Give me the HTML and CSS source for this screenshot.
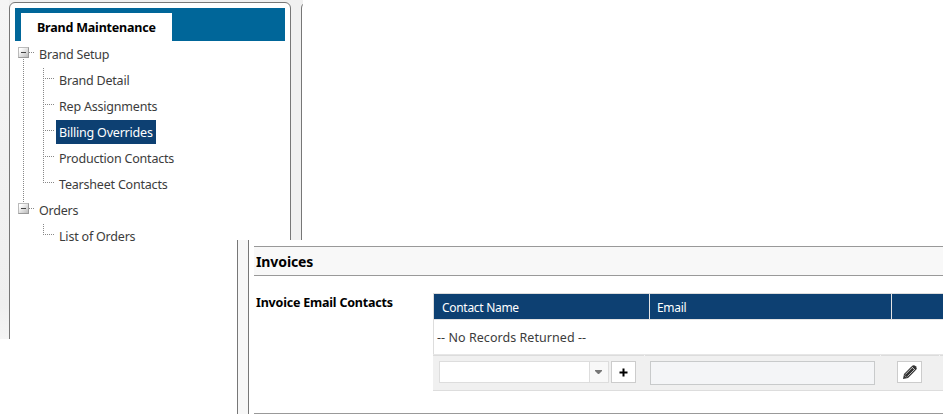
FILE: index.html
```html
<!DOCTYPE html>
<html lang="en">
<head>
<meta charset="utf-8">
<title>Brand Maintenance</title>
<link rel="stylesheet" href="styles.css">
</head>
<body>
<div class="nav-window">
  <div class="gutter"></div>
  <div class="backdrop">
    <nav class="panel">
      <div class="tabs"><div class="tab">Brand Maintenance</div></div>
      <ul class="tree">
        <li class="branch joined">
          <div class="row"><i class="toggle"></i><span>Brand Setup</span></div>
          <ul class="leaves">
            <li><span>Brand Detail</span></li>
            <li><span>Rep Assignments</span></li>
            <li class="selected"><span>Billing Overrides</span></li>
            <li><span>Production Contacts</span></li>
            <li><span>Tearsheet Contacts</span></li>
          </ul>
        </li>
        <li class="branch">
          <div class="row"><i class="toggle"></i><span>Orders</span></div>
          <ul class="leaves">
            <li><span>List of Orders</span></li>
          </ul>
        </li>
      </ul>
    </nav>
    <div class="next-panel"></div>
  </div>
</div>
<main class="detail-window">
  <div class="splitter"></div>
  <section class="content">
    <h2>Invoices</h2>
    <div class="field">
      <div class="label">Invoice Email Contacts</div>
      <div class="table">
        <div class="thead">
          <div class="c1">Contact Name</div>
          <div class="c2">Email</div>
          <div class="c3"></div>
        </div>
        <div class="empty">-- No Records Returned --</div>
        <div class="tfoot">
          <div class="combo"><div class="combo-text"></div><div class="combo-arrow"><svg width="7" height="4" viewBox="0 0 7 4"><path d="M0 0h7v1L4 4H3L0 1z" fill="#777"/></svg></div></div>
          <div class="btn"><svg width="9" height="9" viewBox="0 0 9 9"><path d="M3.5 0.5h2v3h3v2h-3v3h-2v-3h-3v-2h3z" fill="#000"/></svg></div>
          <div class="email"></div>
          <div class="btn edit"><svg width="16" height="16" viewBox="0 0 16 16"><path d="M1 15 2 10 10.2 1.8Q11.8 .3 13.8 2.2Q15.7 4.2 14.2 5.8L6 14Z" fill="#333"/><path d="M3.3 10.5 9.8 4M5.4 12.6 12 6" stroke="#ddd" stroke-width=".8"/><path d="M9.7 2.8 13.2 6.3" stroke="#fff" stroke-width=".8"/><path d="M2.5 11.3 4.7 13.5" stroke="#bbb" stroke-width=".7"/></svg></div>
        </div>
      </div>
    </div>
  </section>
</main>
</body>
</html>
```

FILE: styles.css
```css
* { box-sizing: border-box; }
body { margin: 0; width: 943px; height: 414px; overflow: hidden; position: relative; background: #fff; color: #3c3c3c; font: 12.5px/26px "Noto Sans", "Open Sans", sans-serif; letter-spacing: -.2px; white-space: nowrap; }
ul { list-style: none; margin: 0; padding: 0; }
svg { display: block; }

.nav-window { display: flex; height: 339px; width: 303px; }
.gutter { width: 9px; background: linear-gradient(#f5f5f5, #efefef 90%, #f5f5f5); }
.backdrop { display: flex; gap: 10px; width: 294px; padding-top: 2px; background: #f0f0f0; overflow: hidden; }
.panel { flex: none; width: 282px; height: 345px; border: 1px solid #777; border-radius: 6px; background: #fff; padding: 5px; }
.next-panel { flex: none; width: 50px; height: 345px; border: 1px solid #777; border-radius: 6px; background: #fff; }
.tabs { height: 33px; background: #006699; padding: 5px 0 0 6px; }
.tab { width: 151px; height: 28px; background: #fff; padding-left: 16px; line-height: 30px; font-weight: 700; color: #000; }

.tree { padding: 1px 0 0 3px; line-height: 26px; }
.branch { position: relative; }
.row { height: 26px; display: flex; }
.toggle { position: relative; width: 11px; height: 11px; margin: 5px 10px 0 0; border: 1px solid #bbb; border-right-color: #999; border-bottom-color: #999; background: linear-gradient(135deg, #fff 15%, #bbb); }
.toggle::before { content: ""; position: absolute; left: 2px; top: 4px; width: 5px; height: 1px; background: #444; }
.toggle::after { content: ""; position: absolute; left: 10px; top: 4px; width: 5px; height: 1px; background: repeating-linear-gradient(90deg, #888 0 1px, transparent 1px 2px); }
.joined::before { content: ""; position: absolute; left: 5px; top: 17px; width: 1px; height: 144px; background: repeating-linear-gradient(#888 0 1px, transparent 1px 2px); }
.leaves { position: relative; padding-left: 38px; }
.leaves::before { content: ""; position: absolute; left: 25px; top: 0; width: 1px; bottom: 15px; background: repeating-linear-gradient(#888 0 1px, transparent 1px 2px); }
.leaves li { position: relative; height: 26px; padding-left: 3px; }
.leaves li::before { content: ""; position: absolute; left: -13px; top: 10px; width: 11px; height: 1px; background: repeating-linear-gradient(90deg, #888 0 1px, transparent 1px 2px); }
.leaves .selected { width: 100px; height: 24px; margin-bottom: 2px; color: #fff; background: #0d4072; }

.detail-window { position: absolute; left: 237px; top: 240px; width: 706px; height: 174px; display: flex; background: #fff; }
.splitter { width: 12px; border: solid #777; border-width: 0 1px; background: #f7f7f7; }
.content { flex: 1; margin: 6px 0 0 5px; border-bottom: 1px solid #999; overflow: hidden; }
h2 { margin: 0; height: 30px; padding-left: 2px; border: solid #999; border-width: 1px 0; background: #f8f8f8; color: #000; font-size: 14px; line-height: 29px; letter-spacing: -.1px; }
.field { display: flex; padding-top: 17px; }
.label { width: 179px; padding-left: 2px; font-weight: 700; color: #000; line-height: 19px; }
.table { flex: 1; border: solid #ddd; border-width: 1px 0 1px 1px; }
.thead { display: flex; height: 26px; border-bottom: 1px solid #e4e4e4; background: #0d4072; color: #fff; font-size: 12px; line-height: 28px; letter-spacing: -.3px; }
.thead div { border-right: 1px solid #e4e4e4; padding-left: 8px; }
.thead .c1 { width: 216px; }
.thead .c2 { width: 242px; padding-left: 7px; }
.thead .c3 { flex: 1; border: 0; }
.empty { height: 34px; padding-left: 3px; line-height: 35px; letter-spacing: .05px; }
.tfoot {
  display: flex; height: 36px; margin-left: -1px; padding: 7px 0 0 6px;
  background:
    linear-gradient(#f4f4f4, #f4f4f4) 211px 1px / 1px 1px no-repeat,
    linear-gradient(#f4f4f4, #f4f4f4) 447px 1px / 1px 1px no-repeat,
    linear-gradient(#f4f4f4, #f4f4f4) 506px 1px / 1px 1px no-repeat,
    linear-gradient(#e6e6e6 1px, #dcdcdc 1px 2px, #f0f0f0 2px);
}
.combo { display: flex; width: 170px; height: 22px; border: 1px solid #ddd; background: #fff; }
.combo-text { flex: 1; }
.combo-arrow { width: 19px; border-left: 1px solid #ddd; background: #f8f8f8; padding: 8px 0 0 5px; }
.btn { display: flex; align-items: center; justify-content: center; width: 25px; height: 22px; margin-left: 2px; border: 1px solid #ccc; background: #fff; }
.email { width: 225px; height: 24px; margin-left: 14px; border: 1px solid #c8cacb; background: #f4f5f7; }
.btn.edit { margin-left: 22px; }
```
